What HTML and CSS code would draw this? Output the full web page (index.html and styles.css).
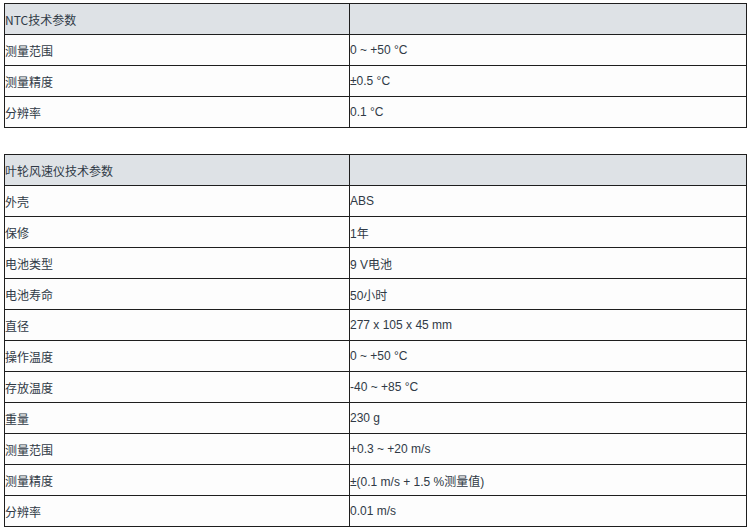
FILE: index.html
```html
<!DOCTYPE html>
<html>
<head>
<meta charset="utf-8">
<link rel="stylesheet" href="styles.css">
</head>
<body>
<table class="spec">
  <tr class="head"><td class="label">NTC技术参数</td><td></td></tr>
  <tr><td class="label">测量范围</td><td class="val">0 ~ +50 °C</td></tr>
  <tr><td class="label">测量精度</td><td class="val">±0.5 °C</td></tr>
  <tr><td class="label">分辨率</td><td class="val">0.1 °C</td></tr>
</table>
<table class="spec second">
  <tr class="head"><td class="label">叶轮风速仪技术参数</td><td></td></tr>
  <tr><td class="label">外壳</td><td class="val">ABS</td></tr>
  <tr><td class="label">保修</td><td class="val">1年</td></tr>
  <tr><td class="label">电池类型</td><td class="val">9 V电池</td></tr>
  <tr><td class="label">电池寿命</td><td class="val">50小时</td></tr>
  <tr><td class="label">直径</td><td class="val">277 x 105 x 45 mm</td></tr>
  <tr><td class="label">操作温度</td><td class="val">0 ~ +50 °C</td></tr>
  <tr><td class="label">存放温度</td><td class="val">-40 ~ +85 °C</td></tr>
  <tr><td class="label">重量</td><td class="val">230 g</td></tr>
  <tr><td class="label">测量范围</td><td class="val">+0.3 ~ +20 m/s</td></tr>
  <tr><td class="label">测量精度</td><td class="val">±(0.1 m/s + 1.5 %测量值)</td></tr>
  <tr><td class="label">分辨率</td><td class="val">0.01 m/s</td></tr>
</table>
</body>
</html>
```
FILE: styles.css
```css
html, body {
  margin: 0;
  padding: 0;
  background: #ffffff;
}
body {
  padding: 3px 4px 0 4px;
}
.spec {
  border-collapse: collapse;
  width: 743px;
  table-layout: fixed;
  background: #fdfdfd;
}
.spec.second {
  margin-top: 26px;
}
.spec td {
  border: 1px solid #1e1e1e;
  height: 30px;
  padding: 0;
  vertical-align: middle;
  color: #303a46;
  font-size: 12px;
}
.spec td:first-child {
  width: 344px;
}
.spec .head td {
  background: #dee2e6;
}
.label {
  font-family: "Noto Sans CJK SC", "Liberation Sans", sans-serif;
}
.val {
  font-family: "Liberation Sans", "Noto Sans CJK SC", sans-serif;
}
```
